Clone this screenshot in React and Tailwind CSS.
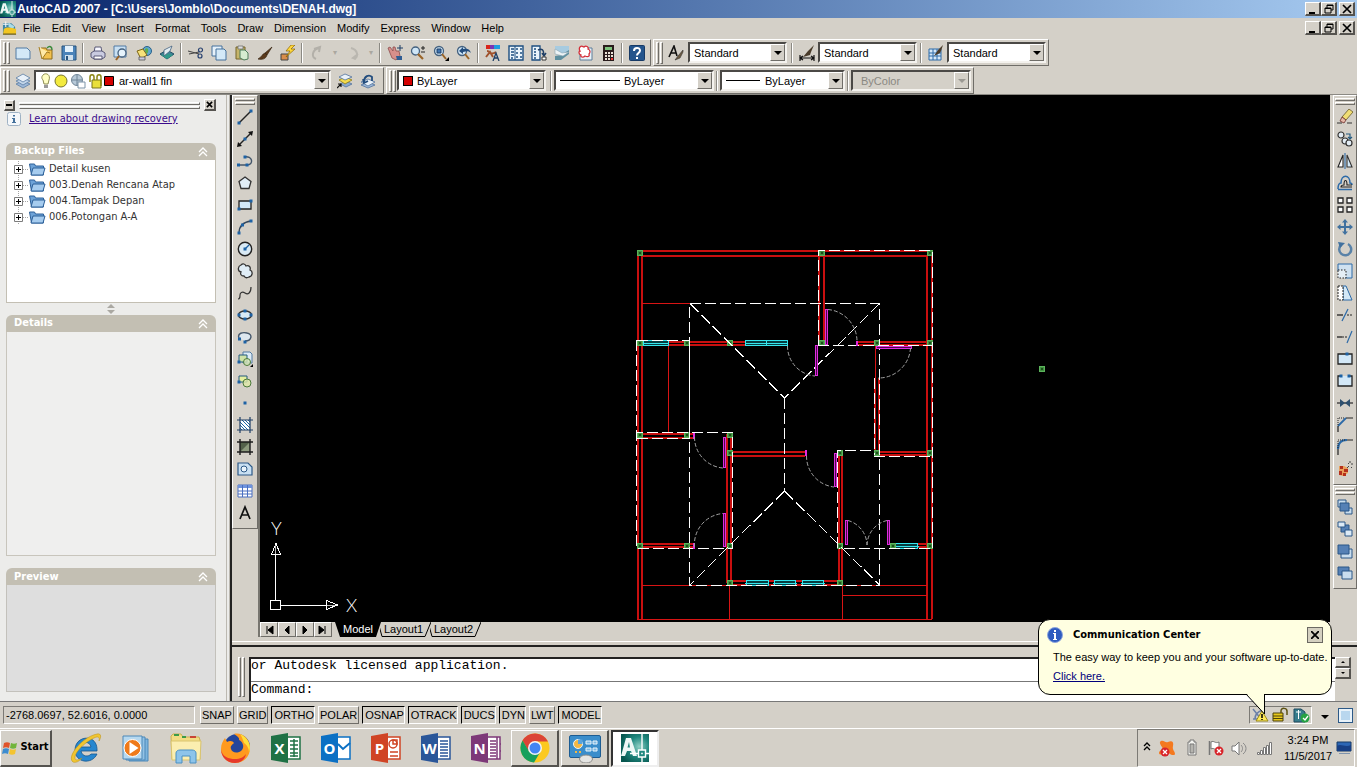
import React from 'react';

const RAISED = 'border border-t-white border-l-white border-r-[#6f6d68] border-b-[#6f6d68]';
const BEVEL = 'border-t border-l border-white border-r-2 border-b-2 border-r-[#55534f] border-b-[#55534f]';
const SUNKEN = 'border border-t-[#7c7a75] border-l-[#7c7a75] border-r-white border-b-white';

const NAVY = '#1f3f66';
const BLUE = '#2c6aa8';
const PALE = '#d3e8f7';

/* ---------- 16x16 tool icons ---------- */
const pt = (x, y, k) => <rect key={k} x={x - 1.5} y={y - 1.5} width="3" height="3" fill="#1d62a5" />;

const ICONS = {
    new: <path d="M1 3h11l3 3v8H1z" fill={PALE} stroke="#527ba3" />,
    open: (
        <g>
            <path d="M3 3h5l1 2h5v9H5z" fill="#f2c14e" stroke="#8c6a1c" />
            <path d="M1 2l3 12 5-7 3 1" fill="#ffe9a6" stroke="#a27b21" />
            <path d="M9 3c3-3 5-1 5 2" fill="none" stroke="#3d8a3d" strokeWidth="1.5" />
        </g>
    ),
    save: (
        <g>
            <path d="M1 1h14v14H1z" fill="#4b83b9" stroke="#29557f" />
            <path d="M4 1h8v6H4z" fill="#e4f1fb" />
            <path d="M4 10h8v5H4z" fill="#cfdfec" />
            <path d="M5 11h2v4H5z" fill="#29557f" />
        </g>
    ),
    print: (
        <g stroke="#4a4a6a" strokeWidth=".9">
            <path d="M4 8l1-6h6l1 6z" fill="#f8f8ff" />
            <path d="M1 8l3-2h8l3 2v4l-3 2H4l-3-2z" fill="#c9cbe0" />
            <path d="M4 11h8v3H4z" fill="#fff" />
        </g>
    ),
    preview: (
        <g>
            <path d="M1 1h12v11H1z" fill="#c9e0f2" stroke="#527ba3" />
            <circle cx="9" cy="8" r="4" fill="#e6f3fc" stroke="#44617f" strokeWidth="1.3" />
            <path d="M6 11l-3 4" stroke="#9a6427" strokeWidth="2" />
        </g>
    ),
    publish: (
        <g>
            <circle cx="11" cy="6" r="4.5" fill="#5fa8cf" stroke="#29608a" />
            <path d="M9 4c2-2 4 0 3 3s-3 1-3-3" fill="#5fae4c" />
            <path d="M1 6l6-2 4 6-6 4z" fill="#f6e27a" stroke="#7d6514" />
            <path d="M3 12l6 0 0 3-6 0z" fill="#c9cbe0" stroke="#555" strokeWidth=".8" />
        </g>
    ),
    plot: (
        <g>
            <path d="M1 9l7-4 7 4-7 5z" fill="#3f8796" stroke="#244f66" />
            <path d="M2 10l6 4 6-4-6-1z" fill="#2f9a8a" />
            <path d="M5 5l8-4-2 5-6 5z" fill="#e4eef2" stroke="#44617f" strokeWidth=".8" />
        </g>
    ),
    cut: (
        <g stroke="#474747" fill="none" strokeWidth="1.2">
            <path d="M0 6l11 3M1 9l10-2" />
            <circle cx="12.5" cy="5" r="2" stroke="#27406f" />
            <circle cx="12" cy="11" r="2" stroke="#27406f" />
        </g>
    ),
    copy: (
        <g stroke="#44719c">
            <path d="M1 1h10v10H1z" fill="#e6f1fa" />
            <path d="M5 4h8l2 2v9H5z" fill={PALE} />
        </g>
    ),
    paste: (
        <g>
            <path d="M2 2h9v12H2z" fill="#c5b46a" stroke="#76652a" />
            <path d="M4 1h5v3H4z" fill="#ddd" stroke="#666" strokeWidth=".7" />
            <path d="M6 5h5l3 3v6l-4 1-4-2z" fill="#d5ecd0" stroke="#4d7d5a" />
        </g>
    ),
    match: <path d="M15 2L8 8l2 2zM8 8c-3 1-3 4-7 6 4 1 8 0 9-4z" fill="#5b3a1c" stroke="#3a2614" strokeWidth=".7" />,
    block: (
        <g>
            <path d="M1 9h7v6H1z" fill="#d98d4c" stroke="#444" />
            <path d="M11 0L6 6h4l-4 6 9-8h-4l4-4z" fill="#ffd83a" stroke="#8b6300" strokeWidth=".7" />
        </g>
    ),
    undo: <path d="M7 14C2 12 3 5 10 3M5 4l6-2-1 5" fill="none" stroke="#b3b0a9" strokeWidth="2" />,
    redo: <path d="M9 14c5-2 4-9-3-11M11 14l-3-1 5-4" fill="none" stroke="#bab7b0" strokeWidth="2" />,
    pan: (
        <g>
            <path d="M1 3l2-1 3 4 0-4 2 0 1 4 3 0 1 5-4 4-4-2z" fill="#d88f8b" stroke="#8c4c4c" strokeWidth=".8" />
            <path d="M13 0v6M10 3h6" stroke={NAVY} />
            <path d="M9 11l6 0 0 4-5 0z" fill="#2f5d93" />
        </g>
    ),
    zoomRt: (
        <g>
            <circle cx="5.5" cy="6" r="4" fill="#cfe6f7" stroke="#44617f" strokeWidth="1.3" />
            <path d="M8 9l5 5" stroke="#9a6427" strokeWidth="2.2" />
            <path d="M13 1v4M11 3h4M11 7h4" stroke="#222" />
        </g>
    ),
    zoomWin: (
        <g>
            <circle cx="6" cy="6" r="4.5" fill="#cfe6f7" stroke="#44617f" strokeWidth="1.3" />
            <path d="M4 4h4v4H4z" fill="#3f74b0" stroke={NAVY} />
            <path d="M9 9l4 5" stroke="#9a6427" strokeWidth="2" />
            <path d="M16 12v4h-4z" fill="#000" />
        </g>
    ),
    zoomPrev: (
        <g>
            <circle cx="6" cy="6" r="4.5" fill="#cfe6f7" stroke="#44617f" strokeWidth="1.3" />
            <path d="M9 9l4 5" stroke="#9a6427" strokeWidth="2" />
            <path d="M3 6l4-4v2c4-1 7 0 8 4-2-2-4-2-8-1v2z" fill="#234d7d" />
        </g>
    ),
    props: (
        <g>
            <path d="M1 0h4v4H1z" fill="#d9261c" />
            <path d="M5 0h4v4H5z" fill="#7a35b5" />
            <path d="M9 0h6v4H9z" fill="#1e9de0" />
            <path d="M2 6c4 0 3 5 9 1M1 12l4-5 3 5" stroke="#a0522d" strokeWidth="2" fill="none" />
            <path d="M8 16l3-8 3 8M9 13h4" stroke={NAVY} strokeWidth="1.3" fill="none" />
        </g>
    ),
    dc: (
        <g>
            <path d="M1 1h14v14H1z" fill="#eaf4fb" stroke="#1d4e80" strokeWidth="1.4" />
            <path d="M3 4h3M3 7h3M3 10h3M3 13h2M8 4h2M12 4h2M8 8h2M12 8h2M8 12h2M12 12h2" stroke="#1d4e80" strokeWidth="1.6" />
            <path d="M7 1v14" stroke="#1d4e80" />
        </g>
    ),
    toolPal: (
        <g>
            <path d="M1 1h8v14H1z" fill="#eaf4fb" stroke="#1d4e80" strokeWidth="1.3" />
            <path d="M3 4h2M3 7h2M3 10h2M3 13h2" stroke="#1d4e80" strokeWidth="1.5" />
            <path d="M7 5c4-2 6 0 6 5M11 8l2 3 2-3" fill="none" stroke={NAVY} strokeWidth="1.4" />
            <path d="M11 12h4v3h-4z" fill="#fff" stroke="#333" />
        </g>
    ),
    sheet: (
        <g>
            <path d="M1 1h14v7l-6 2-8-6z" fill="#a7cbe0" />
            <path d="M1 11l6-1 8-5v4l-8 6H1z" fill="#5f8f9f" />
            <path d="M1 4l7 4 7-1-6 4-8-2z" fill="#eef4f6" stroke="#8aa5b2" strokeWidth=".6" />
        </g>
    ),
    markup: (
        <g>
            <path d="M3 3h12v12H3z" fill="#e9f2f8" stroke="#5d7d99" />
            <path d="M2 1c2-2 3 0 4 0 2-2 5 0 4 2 3 1 2 4 1 5 1 3-2 3-4 2-2 2-5 1-4-1-3-1-2-4-1-4-1-2-1-3 0-4z" transform="translate(1 1)" fill="#fff" stroke="#d42e38" strokeWidth="1.3" />
        </g>
    ),
    calc: (
        <g>
            <path d="M3 0h11v16H3z" fill="#2a1c1c" />
            <path d="M5 2h7v3H5z" fill="#7dc27c" />
            <path d="M5 7h2v2H5zM8 7h2v2H8zM11 7h2v2h-2zM5 10h2v2H5zM8 10h2v2H8zM11 10h2v2h-2zM5 13h2v2H5zM8 13h2v2H8z" fill="#ece2d8" />
            <path d="M11 13h2v2h-2z" fill="#e33" />
        </g>
    ),
    help: (
        <g>
            <rect x="0.5" y="0.5" width="15" height="15" rx="1" fill="#23548c" stroke="#173a66" />
            <path d="M5 6c0-4 6-4 6-.5C11 8 8 8 8 10.500M8 12v2" fill="none" stroke="#fff" strokeWidth="2" />
        </g>
    ),
    textStyle: (
        <g>
            <path d="M1 12L6 1l3 10M3 8h5" fill="none" stroke="#111" strokeWidth="1.6" />
            <path d="M15 5l-5 6-3 4 5-2 3-6z" fill="#6c5a41" stroke="#333" strokeWidth=".6" />
        </g>
    ),
    dimStyle: (
        <g>
            <path d="M1 10v6M15 10v6M1 13h14M4 11l-3 2 3 2M12 11l3 2-3 2" fill="none" stroke="#111" strokeWidth="1.2" />
            <path d="M15 0L9 6l-5 6 7-2 1-3z" fill="#4a3c2b" />
        </g>
    ),
    tableStyle: (
        <g>
            <path d="M1 4h12v11H1z" fill="#d5e8f8" stroke="#2c6aa8" />
            <path d="M1 8h12M1 11h12M5 4v11M9 4v11" stroke="#2c6aa8" />
            <path d="M15 0l-5 5-4 6 6-3 1-2z" fill="#4a3c2b" />
        </g>
    ),
    layers: (
        <g stroke="#5c7da5" strokeWidth=".8">
            <path d="M1 11l7-3 7 3-7 4z" fill="#9db8d8" />
            <path d="M1 8l7-3 7 3-7 4z" fill="#c3d6ea" />
            <path d="M1 5l7-4 7 4-7 4z" fill="#e9f1f9" />
        </g>
    ),
    layerCur: (
        <g strokeWidth=".8">
            <path d="M3 11l6-3 6 3-6 3z" fill="#8aa9cf" stroke="#50719c" />
            <path d="M2 7l6-3 7 3-7 4z" fill="#f4db4a" stroke="#8b7a1a" />
            <path d="M2 4l6-3 7 3-7 3z" fill="#e9f1f9" stroke="#50719c" />
            <path d="M0 15l4-4M1 11h3v3" fill="none" stroke="#111" strokeWidth="1.2" />
        </g>
    ),
    layerPrev: (
        <g strokeWidth=".8">
            <path d="M1 12l7-3 7 3-7 3z" fill="#9db8d8" stroke="#50719c" />
            <path d="M1 9l7-3 7 3-7 4z" fill="#e9f1f9" stroke="#50719c" />
            <path d="M4 9C4 3 9 1 12 4v4M3 6l1 4 4-2" fill="none" stroke="#234d7d" strokeWidth="1.8" />
        </g>
    ),

    line: <g><path d="M2 14L14 2" stroke="#222" strokeWidth="1.4" />{pt(2, 14, 1)}{pt(14, 2, 2)}</g>,
    xline: (
        <g>
            <path d="M2 14L14 2" stroke="#222" strokeWidth="1.4" />
            <path d="M0 16l1-5 4 4zM16 0l-5 1 4 4z" fill="#111" />
            {pt(8, 8, 1)}
        </g>
    ),
    pline: <g><path d="M1 12h8M7 4c9-2 10 8 3 8" fill="none" stroke="#44566a" strokeWidth="1.4" />{pt(1.500, 12, 1)}{pt(10, 12, 2)}{pt(8, 4, 3)}</g>,
    polygon: <path d="M8 2l6 4.500-2 7H4l-2-7z" fill="#e0edf6" stroke="#333" strokeWidth="1.3" />,
    rect: <g><path d="M2 4h12v8H2z" fill={PALE} stroke="#222" strokeWidth="1.3" />{pt(14, 4, 1)}{pt(2, 12, 2)}</g>,
    arc: <g><path d="M2 14C2 7 7 3 14 2" fill="none" stroke="#34475c" strokeWidth="1.3" />{pt(2, 14, 1)}{pt(5.500, 6, 2)}{pt(14, 2, 3)}</g>,
    circle: <g><circle cx="8" cy="8" r="6.700" fill="#d9eaf5" stroke="#222" strokeWidth="1.4" /><path d="M8 8l4-4" stroke="#1d62a5" strokeWidth="1.3" />{pt(8, 8, 1)}</g>,
    cloud: <path d="M4 2c2-2 4-1 5 1 3-1 5 1 4 4 3 1 3 6-1 7-2 1-4 1-5-1-3 0-4-2-3-4-4-1-3-6 0-7z" fill="#e0edf6" stroke="#333" strokeWidth="1.3" />,
    spline: <path d="M1 14c2 0 2-2 2-4s2-4 5-2 6 0 6-6" fill="none" stroke="#333" strokeWidth="1.2" />,
    ellipse: <g><ellipse cx="8" cy="8" rx="6.500" ry="4" fill="#d9eaf5" stroke="#333" strokeWidth="1.4" />{pt(2, 8, 1)}{pt(14, 8, 2)}{pt(8, 4, 3)}{pt(8, 12, 4)}</g>,
    earc: <g><path d="M2 9C0 4 6 3 10 4c6 1 5 8-2 8" fill="#dce6ee" stroke="#44566a" strokeWidth="1.4" />{pt(2.500, 10, 1)}{pt(8, 13, 2)}</g>,
    insert: (
        <g>
            <path d="M6 1h7l2 2v9H6z" fill="#dbeaf6" stroke="#527ba3" />
            <path d="M2 4h8v7H2z" fill="#cfe3a8" stroke="#235a80" />
            <circle cx="10" cy="11" r="3.500" fill="#d8e7b5" fillOpacity=".8" stroke="#4c7b3b" />
            {pt(2, 11, 1)}
            <path d="M16 13v3h-3z" fill="#000" />
        </g>
    ),
    mkblock: <g><path d="M2 3h8v6H2z" fill="#e5ef9f" stroke="#235a80" /><circle cx="10" cy="10" r="4" fill="#dfe9a8" fillOpacity=".8" stroke="#4c7b3b" />{pt(2, 9, 1)}</g>,
    point: pt(8, 8, 1),
    hatch: (
        <g>
            <path d="M3 3h10v10H3z" fill="#fff" />
            <path d="M3 5l8 8M3 8l5 5M5 3l8 8M8 3l5 5M3 11l2 2M11 3l2 2" stroke="#1d62a5" />
            <path d="M3 0v16M13 0v16M0 3h16M0 13h16" stroke={NAVY} strokeWidth="1.2" />
        </g>
    ),
    gradient: (
        <g>
            <path d="M3 3h10v10H3z" fill="#53614a" />
            <path d="M13 3v10H3z" fill="#8c9a7d" />
            <path d="M3 0v16M13 0v16M0 3h16M0 13h16" stroke="#1c1c1c" strokeWidth="1.4" />
        </g>
    ),
    region: <g><path d="M1 2h10l4 4v8H1z" fill="#c9e0f2" stroke="#2c5987" strokeWidth="1.2" /><circle cx="7" cy="8" r="3" fill="#eaf4fb" stroke="#2c5987" /></g>,
    table: (
        <g>
            <path d="M1 2h14v12H1z" fill="#fff" stroke="#4a6fc0" />
            <path d="M1 2h14v3H1z" fill="#6f94dd" />
            <path d="M1 8h14M1 11h14M5.500 2v12M10.500 2v12" stroke="#4a6fc0" />
        </g>
    ),
    mtext: <path d="M3 14L8 2l5 12M5 10h6" fill="none" stroke="#111" strokeWidth="1.7" />,

    erase: (
        <g>
            <path d="M0 14h5M10 14h5" stroke="#333" />
            <path d="M12 0l4 3-7 8-4-3z" fill="#f0dd74" stroke="#665826" strokeWidth=".8" />
            <path d="M5 8l4 3-2 3-4-2z" fill="#e6b9a8" stroke="#6b2b28" strokeWidth=".8" />
        </g>
    ),
    copyObj: (
        <g fill="#e3edf5" stroke="#333" strokeWidth="1.2">
            <circle cx="4" cy="4" r="3" />
            <circle cx="8" cy="10" r="3" />
            <circle cx="12" cy="12" r="3" />
            <path d="M9 3h4v5M11 6l2 2 2-2" fill="none" stroke="#235a80" />
        </g>
    ),
    mirror: <g strokeWidth="1.100"><path d="M6 2v12H1z" fill="#fff" stroke="#222" /><path d="M10 2v12h5z" fill={PALE} stroke="#333" /><path d="M8 0v16" stroke="#2c6aa8" /></g>,
    offset: (
        <g fill="none">
            <path d="M1 14.500h14M1 14C1 9 2 8 4 8c0-9 9-9 9 0 2 0 2 1 2 2" stroke={BLUE} strokeWidth="1.500" />
            <path d="M15 12H4c0-2 1-2 3-2 0-6 3-6 3 0h5" stroke="#222" strokeWidth="1.100" />
        </g>
    ),
    array: <path d="M1 1h5v5H1zM10 1h5v5h-5zM1 10h5v5H1zM10 10h5v5h-5z" fill="#fff" stroke="#222" strokeWidth="1.300" />,
    move: <path d="M8 0l3 3.500H9V7h3.500V5L16 8l-3.500 3V9H9v3.500h2L8 16l-3-3.500h2V9H3.500v2L0 8l3.500-3v2H7V3.500H5z" fill="#41719f" />,
    rotate: <g><path d="M11 3A6 6 0 1 1 4 4" fill="none" stroke="#5982a8" strokeWidth="2.500" /><path d="M1 1l7 1-5 5z" fill="#41719f" /></g>,
    scale: <g><path d="M1 1h14v14H8V8H1z" fill="#cfe1f0" stroke="#2c6aa8" /><path d="M1 7h8v8H1z" fill="#e6eff6" stroke="#222" strokeDasharray="1.500 1.500" /></g>,
    stretch: <g><path d="M6 1h3l6 14H6z" fill={PALE} stroke="#2c6aa8" /><path d="M1 1h5v14H1z" fill="#fff" stroke="#222" strokeDasharray="2 1" /></g>,
    trim: <g><path d="M0 8h6" stroke="#222" strokeWidth="1.300" /><path d="M10 8h6" stroke="#222" strokeDasharray="2 1" /><path d="M5 14l6-12" stroke={BLUE} strokeWidth="1.200" /></g>,
    extend: <g><path d="M0 8h5" stroke="#222" strokeWidth="1.300" /><path d="M5 8h6" stroke="#222" strokeDasharray="2 1" /><path d="M10 14l5-12" stroke={BLUE} strokeWidth="1.200" /></g>,
    breakPt: <g><path d="M1 3h14v10H1z" fill={PALE} stroke="#222" strokeWidth="1.300" />{pt(10, 3, 1)}</g>,
    brk: <g><path d="M5 3H1v10h14V3h-4" fill={PALE} stroke="#222" strokeWidth="1.300" />{pt(4, 3, 1)}{pt(12, 3, 2)}</g>,
    join: <g><path d="M0 8h16" stroke="#333" strokeWidth="1.300" /><path d="M3 4l5 4-5 4zM13 4L8 8l5 4z" fill="#2d4f6e" /></g>,
    chamfer: <g fill="none"><path d="M1 9L9 1" stroke={BLUE} strokeWidth="1.800" /><path d="M1 15V9M9 1h7" stroke="#222" strokeWidth="1.200" /><path d="M1 8V1h7" stroke="#222" strokeDasharray="1 1" /></g>,
    fillet: <g fill="none"><path d="M1 10c0-6 3-9 9-9" stroke={BLUE} strokeWidth="2.200" /><path d="M1 16v-6M10 1h6" stroke="#222" strokeWidth="1.200" /><path d="M1 9V1h8" stroke="#222" strokeDasharray="1 1" /></g>,
    explode: (
        <g>
            <path d="M2 5l5 0 4 2 0 5-5 3-4-1z" fill="#e9a05b" />
            <path d="M3 5h3v3H3zM7 8h4v3H7zM2 10h3v4H2zM6 12h3v3H6z" fill="#b5301d" />
            <path d="M10 7l2-2M13 0v2M16 3h-2M15 7l-1-1M11 2l1 1" stroke="#444" />
        </g>
    ),
    front: <g stroke="#2b5687"><path d="M1 1h8v7H1zM8 9h7v6H8z" fill="#c9ddee" /><path d="M3 4h9v8H3z" fill="#5580b5" /></g>,
    back: <g stroke="#2b5687"><path d="M4 4h8v7H4z" fill="#5580b5" /><path d="M1 1h7v5H1zM8 9h7v6H8z" fill="#dceaf6" /></g>,
    above: <g stroke="#2b5687"><path d="M4 6h11v9H4z" fill="#c9ddee" /><path d="M1 2h11v9H1z" fill="#5580b5" /></g>,
    under: <g stroke="#2b5687"><path d="M1 2h11v8H1z" fill="#5580b5" /><path d="M5 6h10v8H5z" fill="#c9ddee" /></g>,
};

function Icon({ name, className = 'h-4 w-4' }) {
    return <svg viewBox="0 0 16 16" className={`${className} shrink-0`} aria-hidden="true">{ICONS[name]}</svg>;
}

function Tool({ name }) {
    return (
        <button type="button" aria-label={name} className="flex h-[22px] w-[23px] shrink-0 items-center justify-center">
            <Icon name={name} />
        </button>
    );
}

const Tools = ({ names }) => names.map((n) => <Tool key={n} name={n} />);

const Grip = () => (
    <div className="mr-px flex gap-px">
        <div className={`h-[22px] w-[3px] ${RAISED}`} />
        <div className={`h-[22px] w-[3px] ${RAISED}`} />
    </div>
);

const Sep = () => (
    <div className="flex w-1.5 shrink-0 justify-center">
        <div className="h-5 w-0.5 border-l border-[#8b8983] border-r border-r-white" />
    </div>
);

const MiniArrow = () => <span className="w-[13px] shrink-0 text-center text-[8px] text-[#aaa79f]">▾</span>;

function Combo({ label, options, width, indent = 'pl-1', disabled, children }) {
    return (
        <div className={`relative h-[21px] shrink-0 ${width}`}>
            <select
                aria-label={label}
                disabled={disabled}
                className={`block h-[21px] w-full appearance-none border-2 border-t-[#4b4946] border-l-[#4b4946] border-r-[#f4f2ee] border-b-[#f4f2ee] text-[11px] leading-4 opacity-100 outline-none ${indent} ${disabled ? 'bg-[#d4d0c8] text-[#8a8882]' : 'bg-white text-black'}`}
            >
                {options.map((o) => <option key={o}>{o}</option>)}
            </select>
            <span className="pointer-events-none absolute inset-y-0 left-1.5 flex items-center gap-0.5">{children}</span>
            <span className={`pointer-events-none absolute top-0.5 right-0.5 bottom-0.5 flex w-[15px] items-center justify-center bg-[#d4d0c8] ${RAISED}`}>
                <svg viewBox="0 0 8 4" className="h-1 w-2"><path d="M0 0h8L4 4z" fill={disabled ? '#9b9993' : '#000'} /></svg>
            </span>
        </div>
    );
}

const Bar = ({ children, className = '' }) => (
    <div className={`flex h-[27px] items-center pl-0.5 ${RAISED} ${className}`}>{children}</div>
);

/* ---------- Title and menus ---------- */
function WindowButtons() {
    const cls = `flex h-[14px] w-4 items-center justify-center bg-[#d4d0c8] ${BEVEL}`;
    return (
        <div className="ml-auto flex pr-0.5">
            <button type="button" aria-label="Minimize" className={cls}>
                <svg viewBox="0 0 10 10" className="h-2.5 w-2.5"><path d="M1 8h6v2H1z" /></svg>
            </button>
            <button type="button" aria-label="Restore" className={cls}>
                <svg viewBox="0 0 10 10" className="h-2.5 w-2.5"><path d="M3 4V1h6v5H7M3 1.500h6M1 4h6v5H1zM1 4.500h6" fill="none" stroke="#000" /></svg>
            </button>
            <button type="button" aria-label="Close" className={`${cls} ml-0.5`}>
                <svg viewBox="0 0 10 10" className="h-2.5 w-2.5"><path d="M1 1l8 8M9 1L1 9" stroke="#000" strokeWidth="1.700" /></svg>
            </button>
        </div>
    );
}

function AcadLogo({ className }) {
    return (
        <svg viewBox="0 0 28 28" className={className} aria-hidden="true">
            <defs>
                <radialGradient id="teal" cx=".65" cy=".45" r=".7">
                    <stop offset="0" stopColor="#8fcfc4" />
                    <stop offset=".5" stopColor="#20887f" />
                    <stop offset="1" stopColor="#07574f" />
                </radialGradient>
            </defs>
            <path d="M0 0h28v28H0z" fill="url(#teal)" />
            <path d="M0 22L5 4h5l6 18h-4l-2-5H6l-2 5zM6.500 13.500h2.500L8 8z" fill="#eef7f5" />
            <path d="M21 0v16M21 23v5M9 19.500h8.500M24.500 19.500H28" stroke="#fff" strokeWidth="1.400" />
            <path d="M17.500 16h7v7h-7z" fill="#20887f" stroke="#fff" strokeWidth="1.400" />
            <path d="M20.200 18.700h1.600v1.600h-1.600z" fill="#fff" />
        </svg>
    );
}

const MENUS = ['File', 'Edit', 'View', 'Insert', 'Format', 'Tools', 'Draw', 'Dimension', 'Modify', 'Express', 'Window', 'Help'];

function Header() {
    return (
        <header className="shrink-0">
            <div className="flex h-[18px] items-center bg-linear-to-r from-[#0a246a] to-[#a6caf0]">
                <AcadLogo className="mr-px h-4 w-4" />
                <h1 className="text-[12px] font-bold whitespace-nowrap text-white">
                    AutoCAD 2007 - [C:\Users\Jomblo\Documents\DENAH.dwg]
                </h1>
                <WindowButtons />
            </div>
            <nav className="flex h-5 items-center">
                <svg viewBox="0 0 16 16" className="ml-0.5 h-4 w-[15px]" aria-hidden="true">
                    <path d="M1 3h9l4 4v7H1z" fill="#3e87a6" />
                    <path d="M7 2l6 4-1 3-5-2z" fill="#a9dbe6" />
                    <path d="M2 9c4-3 9-1 13 0v6H1z" fill="#f2c521" />
                    <path d="M1 14h14v1H1z" fill="#3a3a1e" />
                    <path d="M1 4h6M4 1v6" stroke="#fff" />
                </svg>
                {MENUS.map((m) => <button type="button" key={m} className="pr-[5px] pl-1.5 text-[11px]">{m}</button>)}
                <WindowButtons />
            </nav>
        </header>
    );
}

function Toolbars() {
    return (
        <div className="shrink-0 border-b border-[#8b8983] pt-px">
            <div className="flex">
                <Bar className="pr-0.5">
                    <Grip />
                    <Tools names={['new', 'open', 'save']} /><Sep />
                    <Tools names={['print', 'preview', 'publish', 'plot']} /><Sep />
                    <Tools names={['cut', 'copy', 'paste', 'match', 'block']} /><Sep />
                    <Tool name="undo" /><MiniArrow /><Tool name="redo" /><MiniArrow /><Sep />
                    <Tools names={['pan', 'zoomRt', 'zoomWin', 'zoomPrev']} /><Sep />
                    <Tools names={['props', 'dc', 'toolPal', 'sheet', 'markup', 'calc']} /><Sep />
                    <Tool name="help" />
                </Bar>
                <Bar className="ml-0.5 pr-0.5">
                    <Grip />
                    <Tool name="textStyle" />
                    <span className="w-px" />
                    <Combo label="Text style" options={['Standard']} width="w-[99px]" />
                    <span className="w-0.5" /><Sep /><Tool name="dimStyle" />
                    <Combo label="Dimension style" options={['Standard']} width="w-[99px]" />
                    <span className="w-px" /><Sep /><Tool name="tableStyle" />
                    <Combo label="Table style" options={['Standard']} width="w-[99px]" />
                </Bar>
            </div>
            <div className="flex pt-px">
                <Bar className="pr-1">
                    <Grip />
                    <Tool name="layers" />
                    <Combo label="Layer" options={['ar-wall1 fin']} width="w-[297px]" indent="pl-[83px]">
                        <svg viewBox="0 0 76 16" className="h-4 w-[76px]">
                            <path d="M3 2c3-3 8 0 6 5l-1 4H4L3 7C1 5 2 3 3 2z" fill="#ffffc4" stroke="#8b8a50" />
                            <path d="M4 12h4v3H4z" fill="#999" />
                            <circle cx="21" cy="8" r="6" fill="#f3ea3e" stroke="#77742b" />
                            <circle cx="37" cy="7" r="5.500" fill="#b7c9d8" stroke="#6f8496" />
                            <path d="M37 2v10M32 7h10" stroke="#6f8496" />
                            <path d="M38 9h7v6h-7z" fill="#fff" stroke="#7c93a7" />
                            <path d="M50 9V4c0-3 4-3 4 0v3" fill="none" stroke="#8d8715" strokeWidth="1.500" />
                            <path d="M52 7h9v8h-9z" fill="#e9df39" stroke="#77721a" />
                            <path d="M57 7V4c0-3 4-3 4 0v9" fill="none" stroke="#8d8715" strokeWidth="1.500" />
                            <path d="M64.500 3.500h9v9h-9z" fill="#d40000" stroke="#000" />
                        </svg>
                    </Combo>
                    <span className="w-0.5" />
                    <Tools names={['layerCur', 'layerPrev']} />
                </Bar>
                <Bar className="ml-0.5 pr-0.5">
                    <Grip />
                    <Combo label="Color" options={['ByLayer']} width="w-[149px]" indent="pl-[18px]">
                        <span className="h-2.5 w-2.5 border border-black bg-[#d40000]" />
                    </Combo>
                    <span className="w-0.5" /><Sep />
                    <Combo label="Linetype" options={['ByLayer']} width="w-[160px]" indent="pl-[68px]">
                        <span className="h-px w-[60px] bg-black" />
                    </Combo>
                    <Sep />
                    <Combo label="Lineweight" options={['ByLayer']} width="w-[125px]" indent="pl-[43px]">
                        <span className="h-px w-[34px] bg-black" />
                    </Combo>
                    <Sep />
                    <Combo label="Plot style" options={['ByColor']} width="w-[120px]" indent="pl-2" disabled />
                </Bar>
            </div>
        </div>
    );
}

/* ---------- Drawing recovery palette ---------- */
const FILES = ['Detail kusen', '003.Denah Rencana Atap', '004.Tampak Depan', '006.Potongan A-A'];

function Panel({ title, className, children }) {
    return (
        <section className={`flex flex-col ${className}`}>
            <div className="flex h-[17px] shrink-0 items-center justify-between rounded-t-md bg-[#c3bfb3] px-2">
                <h2 className="text-[11px] font-bold text-white">{title}</h2>
                <button type="button" aria-label={`Collapse ${title}`}>
                    <svg viewBox="0 0 10 10" className="h-2.5 w-2.5"><path d="M1 5l4-4 4 4M1 9l4-4 4 4" fill="none" stroke="#fff" strokeWidth="1.300" /></svg>
                </button>
            </div>
            {children}
        </section>
    );
}

function Palette() {
    return (
        <aside className="flex w-[230px] shrink-0 flex-col border-r-4 border-double border-[#bcb9b1] bg-[#ececea] pr-2.5 pb-[9px] pl-1.5 font-['DejaVu_Sans_Condensed','DejaVu_Sans',sans-serif] text-[11px] text-[#333]">
            <div className="-ml-0.5 flex items-center pt-1">
                <button type="button" aria-label="Auto-hide" className={`flex h-[11px] w-[11px] items-center justify-center bg-[#d4d0c8] ${BEVEL}`}>
                    <span className="h-0.5 w-1.5 bg-black" />
                </button>
                <div className="mx-1 flex flex-1 flex-col gap-px">
                    <div className={`h-[3px] ${RAISED}`} />
                    <div className={`h-[3px] ${RAISED}`} />
                </div>
                <button type="button" aria-label="Close palette" className={`flex h-3 w-3 items-center justify-center bg-[#d4d0c8] ${BEVEL}`}>
                    <svg viewBox="0 0 8 8" className="h-[7px] w-[7px]"><path d="M1 1l6 6M7 1L1 7" stroke="#000" strokeWidth="1.800" /></svg>
                </button>
            </div>
            <div className="flex h-4 items-center gap-2">
                <svg viewBox="0 0 14 14" className="ml-px h-3.5 w-3.5" aria-hidden="true">
                    <rect x=".5" y=".5" width="13" height="13" rx="2" fill="#f4f7fa" stroke="#9fb2c4" />
                    <path d="M6 3h2v1.500H6zM5 6h3v4h1v1H5v-1h1V7H5z" fill="#44719c" />
                </svg>
                <a href="#recovery" className="text-[#3b0a8c] underline">Learn about drawing recovery</a>
            </div>
            <Panel title="Backup Files" className="mt-4">
                <ul className="h-[143px] border border-t-0 border-[#c3bfb3] bg-white pt-px pl-[7px]">
                    {FILES.map((f) => (
                        <li key={f} className="flex h-4 items-center whitespace-nowrap">
                            <svg viewBox="0 0 34 16" className="mr-px h-4 w-[34px]" aria-hidden="true">
                                <path d="M4.500 0v16M9 8.500h6" stroke="#a5a5a5" strokeDasharray="1 1" />
                                <path d="M.5 4.500h8v8h-8z" fill="#fff" stroke="#7d7d7d" />
                                <path d="M2 8.500h5M4.500 6v5" stroke="#000" />
                                <path d="M15.500 3h5l1 2h8v9h-12z" fill="#6ea3d8" stroke="#2d6099" />
                                <path d="M19 7h12l-2 7H17z" fill="#a6ccef" stroke="#2d6099" />
                            </svg>
                            {f}
                        </li>
                    ))}
                </ul>
            </Panel>
            <div className="flex h-3 items-center justify-center">
                <svg viewBox="0 0 8 10" className="h-2.5 w-2"><path d="M0 4h8L4 0zM0 6h8l-4 4z" fill="#aaa8a2" /></svg>
            </div>
            <Panel title="Details" className="flex-[240]">
                <div className="flex-1 border border-t-0 border-[#c8c5bc] bg-[#efefee]" />
            </Panel>
            <Panel title="Preview" className="mt-3 flex-[123]">
                <div className="flex-1 border border-t-0 border-[#c3c1bb] bg-[#dedede]" />
            </Panel>
        </aside>
    );
}

/* ---------- Side toolbars ---------- */
const DRAW = ['line', 'xline', 'pline', 'polygon', 'rect', 'arc', 'circle', 'cloud', 'spline', 'ellipse', 'earc', 'insert', 'mkblock', 'point', 'hatch', 'gradient', 'region', 'table', 'mtext'];
const MODIFY = ['erase', 'copyObj', 'mirror', 'offset', 'array', 'move', 'rotate', 'scale', 'stretch', 'trim', 'extend', 'breakPt', 'brk', 'join', 'chamfer', 'fillet', 'explode'];
const ORDER = ['front', 'back', 'above', 'under'];

function SideBar({ names }) {
    return (
        <div className={`flex flex-col items-center pt-0.5 pb-1 ${RAISED}`}>
            <div className="mb-px flex w-5 flex-col gap-px">
                <div className={`h-[3px] ${RAISED}`} />
                <div className={`h-[3px] ${RAISED}`} />
            </div>
            <Tools names={names} />
        </div>
    );
}

/* ---------- Floor plan ---------- */
const COLUMNS = [
    [637, 250], [819, 250], [927, 250],
    [637, 340], [684, 340], [727, 340], [819, 340], [874, 340], [927, 340],
    [637, 432], [684, 432], [727, 432],
    [727, 450], [837, 450], [874, 450], [927, 450],
    [637, 543], [684, 543], [727, 543], [837, 543], [890, 543], [927, 543],
    [727, 580], [837, 580], [1039, 366],
];

function Plan() {
    return (
        <svg viewBox="260 95 1070 527" preserveAspectRatio="xMinYMin meet" className="absolute inset-0 h-full w-full" shapeRendering="crispEdges" fill="none">
            {/* walls */}
            <g stroke="#c80f0f" strokeWidth="2">
                <path d="M638 250V619M642 256V619M637 251H932M642 256H927M927 256V619M932 251V619" />
                <path d="M819 251V343M824 256V340" />
                <path d="M637 342H745M637 345H745M857 342H932M857 345H932" />
                <path d="M637 434H694M637 438H694M637 544H694M637 547H694" />
                <path d="M727 434V583M731 434V583M839 453V583M842 453V583" />
                <path d="M732 452H805M732 456H805M874 452H932M874 455H932" />
                <path d="M875 378V455M879 378V455M918 544H932M918 547H932" />
                <path d="M727 581H842M727 585H842" />
            </g>
            <g stroke="#d81414">
                <path d="M642 303.500H690M668.500 346V432M642 585.500H730M842 585.500H927M842 595.500H927" />
                <path d="M729.500 586V619M842.500 586V619M637 619.500H932M875.500 346V378" />
            </g>
            {/* windows */}
            <g stroke="#35e6ee" fill="#063c40">
                <path d="M643.500 340.500h25v5h-25zM643 343.500h25" />
                <path d="M745.500 340.500h42v5h-42zM745 343.500h42M766.500 340v6" />
                <path d="M746.500 580.500h22v5h-22zM774.500 580.500h21v5h-21zM802.500 580.500h21v5h-21z" />
                <path d="M745 583.500h24M773 583.500h24M801 583.500h24M895.500 543.500h22v5h-22zM895 546.500h24" />
            </g>
            {/* columns */}
            {COLUMNS.map(([x, y]) => (
                <g key={`${x}-${y}`}>
                    <path d={`M${x + 0.5} ${y + 0.5}h5v5h-5z`} fill="#3f8f3f" stroke="#5cb45c" />
                    <path d={`M${x + 2} ${y + 2}h2v2h-2z`} fill="#1c4f1c" />
                </g>
            ))}
            {/* roof and room outlines */}
            <g stroke="#fff" strokeDasharray="11 4">
                <path d="M689.500 303.500H879.500V585.500H689.500V303.500" />
                <path d="M784.500 398V491" />
                <path d="M818.500 345.500V250.500H932.500V548.500H838.500M818 345.500H932M636.500 340.500H690M636.500 340V548.500H732.500V432.500H636.500M637 438.500H690" />
                <path d="M837.500 548V450.500H874M874 456.500H932M874.500 378V455" />
            </g>
            <g stroke="#fff" strokeDasharray="12 4">
                <path d="M690 303.500L784.500 398M879.500 303.500L784.500 398M784.500 491L690 585M784.500 491L879.500 585" />
            </g>
            <path d="M689.500 340V438" stroke="#fff" />
            {/* doors */}
            <g stroke="#e02ce0" fill="#4a0a4a">
                <path d="M825.500 309.500h2v35h-2zM815.500 345.500h2v30h-2zM876 346.500h35v2h-35zM723.500 437.500h2v30h-2z" />
                <path d="M723.500 513.500h2v33h-2zM834.500 453.500h2v33h-2zM845.500 520.500h2v24h-2zM887.500 520.500h2v24h-2z" />
                <path d="M693.500 433v6M693.500 543v6M805.500 450v6M856.500 341v5" strokeWidth="2" />
            </g>
            <g stroke="#a2a2a2" strokeDasharray="4 2" shapeRendering="auto">
                <path d="M828 309.500A32 32 0 0 1 857 341M787.500 346A30 30 0 0 0 815 376M910.500 348A32 32 0 0 1 878 378" />
                <path d="M694.500 437A31 31 0 0 0 723 468M694.500 547A31 31 0 0 1 723 513.500M806.500 456A31 31 0 0 0 834 487" />
                <path d="M848 520.500A26 26 0 0 1 867 545M887 520.500A26 26 0 0 0 867 545" />
            </g>
            {/* UCS icon */}
            <g stroke="#fff">
                <path d="M270.500 600.500h10v9h-10zM275.500 600V555M281 605.500H326M271.500 554.500h9l-4.500-11zM326.500 600.500v9l11-4.500z" />
                <path d="M275.500 545V554M327 605.500H335" stroke="#bbb" />
            </g>
            <text x="271" y="535" fill="#fff" className="font-['Lato',sans-serif] text-[18px] font-light">Y</text>
            <text x="346" y="612" fill="#fff" className="font-['Lato',sans-serif] text-[18px] font-light">X</text>
        </svg>
    );
}

const NAV = ['M3 1v8M9 1v8L4 5z', 'M7 1v8L3 5z', 'M3 1v8l4-4z', 'M7 1v8M1 1v8l5-4z'];

function LayoutTabs() {
    return (
        <div className="flex h-[15px] shrink-0 text-[11px]">
            {NAV.map((d) => (
                <button type="button" key={d} aria-label="Scroll tabs" className={`flex w-[18px] items-center justify-center ${RAISED}`}>
                    <svg viewBox="0 0 10 10" className="h-2.5 w-2.5"><path d={d} stroke="#000" /></svg>
                </button>
            ))}
            <button type="button" className="relative ml-[3px] flex w-[46px] items-center justify-center text-white">
                <svg viewBox="0 0 46 15" preserveAspectRatio="none" className="absolute inset-0 h-full w-full"><path d="M0 0h46l-5 15H5z" fill="#000" /></svg>
                <span className="relative">Model</span>
            </button>
            {['Layout1', 'Layout2'].map((t) => (
                <button type="button" key={t} className="relative -ml-px flex w-[51px] items-center justify-center">
                    <svg viewBox="0 0 51 15" preserveAspectRatio="none" className="absolute inset-0 h-full w-full"><path d="M-2 0L2 14.500H45L51 0" fill="none" stroke="#000" /></svg>
                    <span className="relative pr-1">{t}</span>
                </button>
            ))}
        </div>
    );
}

function CommandWindow() {
    const arrow = `flex h-[11px] items-center justify-center bg-[#d4d0c8] ${BEVEL}`;
    return (
        <div className="flex h-[56px] shrink-0 border-t-2 border-[#222] pt-2.5 pl-1.5 font-['Liberation_Mono',monospace] text-[13px]">
            <div className="flex gap-px pr-1">
                <div className={`h-[40px] w-[3px] ${RAISED}`} />
                <div className={`h-[40px] w-[3px] ${RAISED}`} />
            </div>
            <div className="flex flex-1 flex-col border-t-2 border-l-2 border-[#222] bg-white">
                <p className="h-[23px] border-b border-[#777] leading-[14px]">or Autodesk licensed application.</p>
                <label className="flex h-4 items-center">
                    Command:
                    <input className="ml-1 flex-1 bg-transparent outline-none" />
                </label>
            </div>
            <div className="mr-1.5 flex w-4 flex-col">
                <button type="button" aria-label="Scroll up" className={arrow}>
                    <svg viewBox="0 0 4 2" className="h-0.5 w-1"><path d="M0 2h4L2 0z" /></svg>
                </button>
                <button type="button" aria-label="Scroll down" className={arrow}>
                    <svg viewBox="0 0 4 2" className="h-0.5 w-1"><path d="M0 0h4L2 2z" /></svg>
                </button>
            </div>
        </div>
    );
}

/* ---------- Status bar ---------- */
const MODES = [['SNAP', 0], ['GRID', 0], ['ORTHO', 1], ['POLAR', 0], ['OSNAP', 1], ['OTRACK', 1], ['DUCS', 1], ['DYN', 1], ['LWT', 0], ['MODEL', 1]];

function StatusBar() {
    return (
        <div className="flex h-[27px] shrink-0 items-center gap-[5px] border-t border-[#777] pl-[3px] text-[11px]">
            <div className={`h-[18px] w-[192px] pl-0.5 leading-4 ${SUNKEN}`}>-2768.0697, 52.6016, 0.0000</div>
            <div className="flex gap-[3px]">
                {MODES.map(([m, on]) => (
                    <button type="button" key={m} aria-pressed={!!on} className={`h-[18px] leading-4 ${on ? 'border border-t-black border-l-black border-r-white border-b-white pl-0.5' : `px-px ${RAISED}`}`}>{m}</button>
                ))}
            </div>
            <div className={`ml-auto flex h-[18px] w-[63px] items-center justify-around ${SUNKEN}`}>
                <svg viewBox="0 0 60 16" className="h-4 w-[60px]" aria-hidden="true">
                    <path d="M2 2l8 10M4 12c0-5 4-8 8-9M2 12h7" stroke="#6a7fa8" strokeWidth="1.500" fill="none" />
                    <path d="M11 4l6 10H5z" fill="#ffe95a" stroke="#9a8a17" />
                    <path d="M11 7v4M11 12v1" stroke="#000" strokeWidth="1.500" />
                    <path d="M22 6h10v8H22z" fill="#e8c81c" stroke="#4c430b" />
                    <path d="M22 9h10M22 11.500h10" stroke="#4c430b" />
                    <path d="M30 6V4c0-4 6-3 6 0v4" fill="none" stroke="#5c5112" strokeWidth="1.500" />
                    <path d="M43 2h7l4 3v10H43z" fill="#377d8c" stroke="#1e4a60" />
                    <path d="M45 5h5M47.500 3v9" stroke="#fff" />
                    <circle cx="54" cy="11" r="4.500" fill="#27a243" />
                    <path d="M52 11l2 2 3-4" fill="none" stroke="#fff" strokeWidth="1.300" />
                </svg>
            </div>
            <button type="button" aria-label="Status bar menu" className="w-4 pt-1 pl-1">
                <svg viewBox="0 0 8 4" className="h-1 w-2"><path d="M0 0h8L4 4z" /></svg>
            </button>
            <button type="button" aria-label="Clean screen" className="mr-1 h-[15px] w-[15px] border border-[#2c5987] bg-[#b9d7ee] shadow-[inset_0_0_0_2px_#e9f3fa]" />
        </div>
    );
}

function Balloon() {
    return (
        <div role="dialog" aria-label="Communication Center" className="absolute right-[25px] bottom-[72px] w-[294px] rounded-xl border border-black bg-[#ffffe1] pr-1 pl-3.5 pt-[7px] pb-2.5 text-[11px]">
            <div className="flex items-center">
                <svg viewBox="0 0 16 16" className="-ml-1.5 h-4 w-4" aria-hidden="true">
                    <circle cx="8" cy="8" r="7.500" fill="#2f5cc0" stroke="#8ea6dd" />
                    <path d="M7 3h2v2H7zM6 6h3v6h1v1H6v-1h1V7H6z" fill="#fff" />
                </svg>
                <h2 className="ml-2.5 font-['DejaVu_Sans_Condensed','DejaVu_Sans',sans-serif] font-bold">Communication Center</h2>
                <button type="button" aria-label="Dismiss" className="mr-1 ml-auto flex h-4 w-4 items-center justify-center border border-[#6b6962] bg-[#d4d0c0]">
                    <svg viewBox="0 0 8 8" className="h-2 w-2"><path d="M0 0l8 8M8 0L0 8" stroke="#000" strokeWidth="1.800" /></svg>
                </button>
            </div>
            <p className="mt-1.5 leading-4 whitespace-nowrap">The easy way to keep you and your software up-to-date.</p>
            <a href="#update" className="mt-[3px] block leading-4 text-[#00007c] underline">Click here.</a>
            <svg viewBox="0 0 22 21" className="absolute top-full right-[65px] h-[21px] w-[22px]" aria-hidden="true">
                <path d="M2 -1L20.500 20V-1z" fill="#ffffe1" />
                <path d="M2 0L20.500 20V0" fill="none" stroke="#000" />
            </svg>
        </div>
    );
}

/* ---------- Taskbar ---------- */
function Office({ color, letter, children }) {
    return (
        <svg viewBox="0 0 32 32" className="h-8 w-8" aria-hidden="true">
            <path d="M17 5h13v22H17z" fill="#fff" stroke={color} strokeWidth="1.500" />
            <g stroke={color} fill="none" strokeWidth="1.500">{children}</g>
            <path d="M1 4L18 1v30L1 28z" fill={color} />
            <text x="9.500" y="21.500" textAnchor="middle" fill="#fff" className="font-['Open_Sans',sans-serif] text-[15px] font-bold">{letter}</text>
        </svg>
    );
}

const LAUNCH = [
    ['Internet Explorer', (
        <svg viewBox="0 0 32 32" className="h-8 w-8" aria-hidden="true">
            <path d="M27 19H11c1 6 8 6 10 3h6C22 33 5 31 5 18 5 3 28 1 27 19zM11 15h10c-1-6-9-6-10 0z" fill="#2787cf" stroke="#14578f" strokeWidth=".8" />
            <path d="M3 30C-4 25 12 5 27 2c5-1 4 4 2 7 1-4-1-5-5-3C13 11 4 22 5 26c0 3 4 2 7 0-3 4-7 5-9 4z" fill="#f0c531" stroke="#b98f17" strokeWidth=".5" />
        </svg>
    )],
    ['Media Player', (
        <svg viewBox="0 0 32 32" className="h-8 w-8" aria-hidden="true">
            <path d="M9 7h19v22H9z" fill="#7db4dd" stroke="#4c88b8" />
            <path d="M6 5h19v23H6z" fill="#93c2e5" stroke="#4c88b8" />
            <path d="M3 4h19v23H3z" fill="#b6d8ef" stroke="#4c88b8" />
            <circle cx="12.500" cy="16" r="8.500" fill="#ef7a1a" stroke="#fff" />
            <path d="M9.500 10l9 6-9 6z" fill="#fff" />
        </svg>
    )],
    ['Explorer', (
        <svg viewBox="0 0 32 32" className="h-8 w-8" aria-hidden="true">
            <path d="M1 4l2-2h8l2 3h16l1 3v19H2z" fill="#f2dc83" stroke="#cbb052" />
            <path d="M4 3h5M12 5h4" stroke="#3c9b49" strokeWidth="2" />
            <path d="M20 5h6" stroke="#c84436" strokeWidth="2" />
            <path d="M1 9h30l-1 19H2z" fill="#fbeeb0" stroke="#d9c46e" />
            <path d="M6 31V21c0-2 2-3 4-3h12c2 0 4 1 4 3v10h-6v-7h-8v7z" fill="#8dc4ea" stroke="#4b90c3" />
        </svg>
    )],
    ['Firefox', (
        <svg viewBox="0 0 32 32" className="h-8 w-8" aria-hidden="true">
            <circle cx="17" cy="15" r="13" fill="#24469b" />
            <path d="M14 2c7-2 16 4 16 14 0 9-7 15-15 15S1 25 1 17c0-5 2-8 4-11l2 4c3-2 6-1 7 1-2 2-4 3-3 6 1 4 7 5 11 1 3-4 0-9-3-10 1-2-2-4-5-6z" fill="#ff9a1f" />
            <path d="M20 2c8 3 12 12 9 19 0-5-2-8-5-10-1-3-2-6-4-9z" fill="#ffdf3b" />
            <path d="M1 17c1 8 8 10 14 10 5 0 9-2 11-5-1 6-6 9-11 9C7 31 1 25 1 17z" fill="#e6392b" />
        </svg>
    )],
    ['Excel', <Office color="#1f7145" letter="X"><path d="M20 9h8M20 13h8M20 17h8M20 21h8M20 24h8M24 7v18" /></Office>],
    ['Outlook', <Office color="#0b70c4" letter="O"><path d="M18 12l5 5 7-6" strokeWidth="2" /></Office>],
    ['PowerPoint', <Office color="#d04425" letter="P"><circle cx="23" cy="12" r="4" /><path d="M23 12V8h4v4zM20 20h8M20 24h8" /></Office>],
    ['Word', <Office color="#2a5699" letter="W"><path d="M20 9h8M20 12h8M20 15h8M20 18h8M20 21h8M20 24h8" /></Office>],
    ['OneNote', <Office color="#7d3878" letter="N"><path d="M20 9h6M20 12h6M20 15h6M20 18h6M20 21h6M20 24h6M27 5v22M30 12h1M30 19h1" /></Office>],
];

function Taskbar() {
    return (
        <footer className="flex h-[39px] shrink-0 items-center border-t border-white text-[11px]">
            <button type="button" className={`flex h-[37px] w-[52px] items-center justify-center gap-0.5 font-['DejaVu_Sans_Condensed','DejaVu_Sans',sans-serif] font-bold ${BEVEL}`}>
                <svg viewBox="0 0 16 16" className="h-4 w-4 shrink-0" aria-hidden="true">
                    <path d="M2 3c2-1 4-1 6 0L7 8c-2-1-4-1-6 0z" fill="#e0532a" />
                    <path d="M9 3c2 1 4 1 6 0l-1 5c-2 1-4 1-6 0z" fill="#72b53c" />
                    <path d="M1 9c2-1 4-1 6 0l-1 5c-2-1-4-1-6 0z" fill="#3d8ccf" />
                    <path d="M8 9c2 1 4 1 6 0l-1 5c-2 1-4 1-6 0z" fill="#f4c430" />
                </svg>
                Start
            </button>
            <div className="ml-[9px] flex">
                {LAUNCH.map(([name, icon]) => (
                    <button type="button" key={name} aria-label={name} className="flex w-[50px] justify-center">{icon}</button>
                ))}
            </div>
            <div className="flex gap-0.5">
                <button type="button" aria-label="Chrome" className={`flex h-[37px] w-12 items-center justify-center ${BEVEL}`}>
                    <svg viewBox="0 0 30 30" className="h-[30px] w-[30px]" aria-hidden="true">
                        <circle cx="15" cy="15" r="14.500" fill="#fbc920" />
                        <path d="M2.500 7.500A14.500 14.500 0 0 1 28 8.500H15L8.500 18z" fill="#db4437" />
                        <path d="M2.500 7.500A14.500 14.500 0 0 0 14 29.500l6.500-11-11 .5z" fill="#17a05d" />
                        <circle cx="15" cy="15" r="7" fill="#f5f5f5" />
                        <circle cx="15" cy="15" r="5.500" fill="#4285f4" />
                    </svg>
                </button>
                <button type="button" aria-label="Control Panel" className={`flex h-[37px] w-12 items-center justify-center ${BEVEL}`}>
                    <svg viewBox="0 0 32 30" className="h-[30px] w-8" aria-hidden="true">
                        <rect x="0.500" y="2.500" width="31" height="22" rx="1.500" fill="#3a8dcb" stroke="#1d5c92" />
                        <circle cx="9" cy="11" r="4.500" fill="#f2b844" stroke="#e9f3fa" />
                        <path d="M9 11V6.500h4.500V11z" fill="#5ba3dc" />
                        <path d="M17 8h5v3h-5zM24 8h4v3h-4zM17 15h5v3h-5zM24 15h4v3h-4z" fill="#7db9e4" stroke="#e9f3fa" />
                        <path d="M6 19h2M10 19h2" stroke="#f2b844" strokeWidth="2" />
                        <ellipse cx="17" cy="26" rx="6.500" ry="4" fill="#e4e4e2" stroke="#8c8c8a" />
                    </svg>
                </button>
                <button type="button" aria-label="AutoCAD" className="flex h-[37px] w-12 items-center justify-center border-2 border-t-[#333] border-l-[#333] border-r-[#eee] border-b-[#eee] bg-white">
                    <AcadLogo className="h-7 w-7" />
                </button>
            </div>
            <div className={`mr-0.5 ml-auto flex h-[38px] w-[218px] items-center ${SUNKEN}`}>
                <svg viewBox="0 0 144 20" className="h-5 w-36 shrink-0" fill="none" aria-hidden="true">
                    <path d="M6 8l3-3 3 3M6 12l3-3 3 3" stroke="#000" strokeWidth="1.300" />
                    <path d="M23 3c3-1 4 2 7 1 4-2 6 0 5 4s2 5 2 8c0 2-5 1-6-1-4 1-10 3-10 0s5-3 3-6-3-5-1-6z" fill="#f4791f" />
                    <circle cx="27" cy="14" r="4.500" fill="#d8252b" />
                    <path d="M25 12l4 4M29 12l-4 4" stroke="#fff" strokeWidth="1.300" />
                    <path d="M50 4h2V2h4v2h2v13h-8z" fill="#f4f4f0" stroke="#777" />
                    <path d="M52 6h4v9h-4z" fill="#b5b4af" stroke="#777" />
                    <path d="M71.500 3v14" stroke="#777" strokeWidth="1.500" />
                    <path d="M73 4c3-2 4 2 8 0v7c-4 2-5-2-8 0z" fill="#fff" stroke="#777" />
                    <circle cx="81" cy="13" r="4.500" fill="#d8252b" />
                    <path d="M79 11l4 4M83 11l-4 4" stroke="#fff" strokeWidth="1.300" />
                    <path d="M94 8h3l4-4v13l-4-4h-3z" fill="#fff" stroke="#777" />
                    <path d="M103 7c2 2 2 5 0 7M105 5c4 3 4 8 0 11" stroke="#888" />
                    <path d="M119.500 14.500h2v2h-2zM122.500 12.500h2v4h-2zM125.500 9.500h2v7h-2zM128.500 7.500h2v9h-2zM131.500 4.500h2v12h-2z" fill="#fff" stroke="#777" />
                </svg>
                <div className="flex-1 text-center leading-4">
                    <p>3:24 PM</p>
                    <p>11/5/2017</p>
                </div>
                <svg viewBox="0 0 16 14" className="mx-0.5 h-3.5 w-4 shrink-0" aria-hidden="true">
                    <path d="M1 1h14v9H1z" fill="#2c66b5" stroke="#173a66" />
                    <path d="M1 10V5c4-3 8 2 14-1v6z" fill="#173f85" />
                    <path d="M3 12h11v1H3z" fill="#7f94ad" />
                </svg>
            </div>
        </footer>
    );
}

export default function App() {
    return (
        <div className="relative flex h-screen flex-col overflow-hidden bg-[#d4d0c8] font-['Liberation_Sans',Arial,sans-serif] text-black">
            <Header />
            <Toolbars />
            <div className="flex min-h-0 flex-1">
                <Palette />
                <div className="flex min-w-0 flex-1 flex-col border-l-2 border-[#222]">
                    <div className="flex min-h-0 flex-1 border-b border-white pb-1">
                        <div className="w-[26px] shrink-0"><SideBar names={DRAW} /></div>
                        <main className="flex min-w-0 flex-1 flex-col border-l-2 border-[#77756f]">
                            <div className="relative flex-1 overflow-hidden bg-black"><Plan /></div>
                            <LayoutTabs />
                        </main>
                        <div className="ml-[3px] w-6 shrink-0">
                            <SideBar names={MODIFY} />
                            <SideBar names={ORDER} />
                        </div>
                    </div>
                    <div className="h-[3px] shrink-0" />
                    <CommandWindow />
                </div>
            </div>
            <StatusBar />
            <Taskbar />
            <Balloon />
        </div>
    );
}
